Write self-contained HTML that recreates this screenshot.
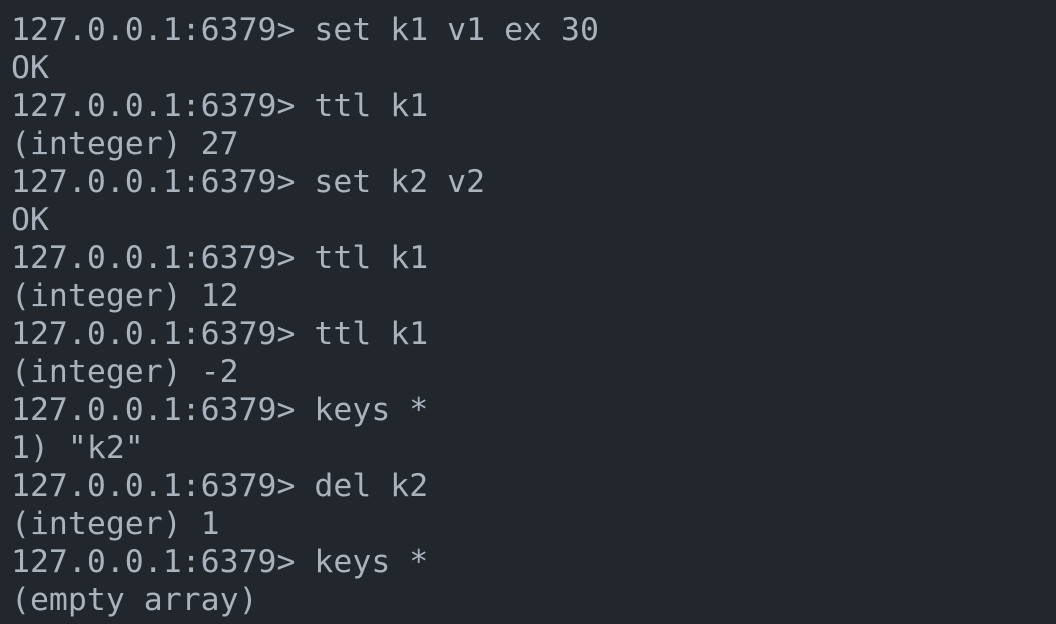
<!DOCTYPE html>
<html><head><meta charset="utf-8"><style>
html,body{margin:0;padding:0;width:1056px;height:624px;overflow:hidden;background:#22272e;}
pre{margin:0;position:absolute;left:11px;top:11px;font-family:"DejaVu Sans Mono","Liberation Mono",monospace;font-size:31.5px;line-height:38px;color:#aab2bc;}
</style></head><body>
<pre>127.0.0.1:6379&gt; set k1 v1 ex 30
OK
127.0.0.1:6379&gt; ttl k1
(integer) 27
127.0.0.1:6379&gt; set k2 v2
OK
127.0.0.1:6379&gt; ttl k1
(integer) 12
127.0.0.1:6379&gt; ttl k1
(integer) -2
127.0.0.1:6379&gt; keys *
1) "k2"
127.0.0.1:6379&gt; del k2
(integer) 1
127.0.0.1:6379&gt; keys *
(empty array)</pre>
</body></html>
